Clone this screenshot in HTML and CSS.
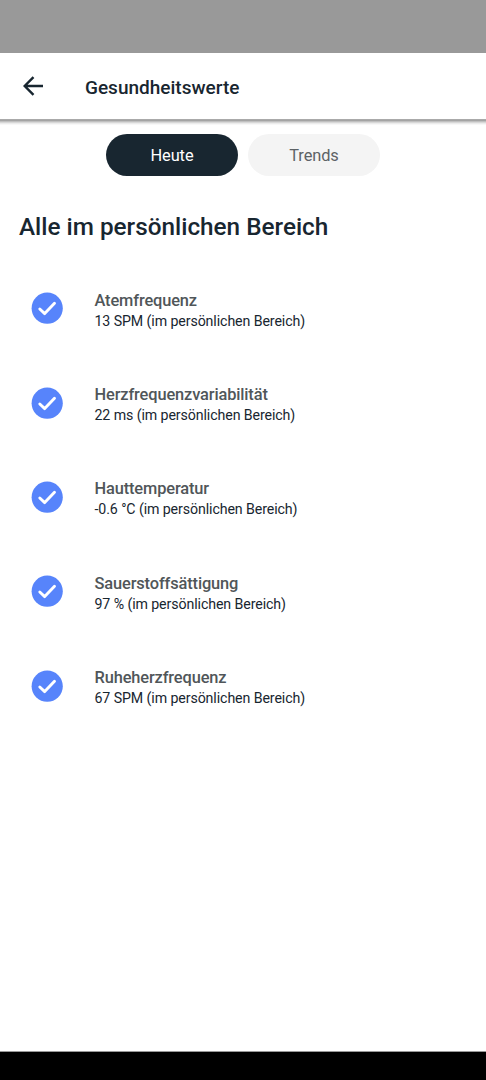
FILE: index.html
```html
<!DOCTYPE html>
<html lang="de">
<head>
<meta charset="utf-8">
<title>Gesundheitswerte</title>
<link rel="stylesheet" href="styles.css">
</head>
<body>
<div class="status-bar"></div>
<header class="app-bar">
  <svg class="back" viewBox="0 0 28 28"><path d="M24 14H6M14.5 5.2l-8.8 8.8 8.8 8.8"/></svg>
  <h1 class="title">Gesundheitswerte</h1>
</header>
<main class="content">
  <nav class="tabs">
    <button class="tab tab-active">Heute</button>
    <button class="tab">Trends</button>
  </nav>
  <h2 class="headline">Alle im persönlichen Bereich</h2>
  <ul class="metrics">
    <li class="metric">
      <svg class="check" viewBox="0 0 32 32"><circle cx="16.2" cy="16.2" r="15.6"/><path d="M8.8 17l4.9 4.6L23.5 11.3"/></svg>
      <div class="text"><div class="name">Atemfrequenz</div><div class="value">13 SPM (im persönlichen Bereich)</div></div>
    </li>
    <li class="metric">
      <svg class="check" viewBox="0 0 32 32"><circle cx="16.2" cy="16.2" r="15.6"/><path d="M8.8 17l4.9 4.6L23.5 11.3"/></svg>
      <div class="text"><div class="name">Herzfrequenzvariabilität</div><div class="value">22 ms (im persönlichen Bereich)</div></div>
    </li>
    <li class="metric">
      <svg class="check" viewBox="0 0 32 32"><circle cx="16.2" cy="16.2" r="15.6"/><path d="M8.8 17l4.9 4.6L23.5 11.3"/></svg>
      <div class="text"><div class="name">Hauttemperatur</div><div class="value">-0.6 °C (im persönlichen Bereich)</div></div>
    </li>
    <li class="metric">
      <svg class="check" viewBox="0 0 32 32"><circle cx="16.2" cy="16.2" r="15.6"/><path d="M8.8 17l4.9 4.6L23.5 11.3"/></svg>
      <div class="text"><div class="name">Sauerstoffsättigung</div><div class="value">97 % (im persönlichen Bereich)</div></div>
    </li>
    <li class="metric">
      <svg class="check" viewBox="0 0 32 32"><circle cx="16.2" cy="16.2" r="15.6"/><path d="M8.8 17l4.9 4.6L23.5 11.3"/></svg>
      <div class="text"><div class="name">Ruheherzfrequenz</div><div class="value">67 SPM (im persönlichen Bereich)</div></div>
    </li>
  </ul>
</main>
<div class="nav-bar"></div>
</body>
</html>
```
FILE: styles.css
```css
* { box-sizing: border-box; margin: 0; padding: 0; }
body {
  display: flex;
  flex-direction: column;
  height: 1080px;
  background: #fff;
  color: #182630;
  font-family: Roboto, sans-serif;
}
.status-bar { height: 53px; background: #999; }
.app-bar {
  display: flex;
  align-items: center;
  height: 66px;
  padding-left: 19px;
}
.back { width: 28px; height: 28px; margin-right: 38px; }
.back path { fill: none; stroke: #182630; stroke-width: 2.4; }
.title { padding-top: 3px; font-size: 19px; font-weight: 500; line-height: 24px; }
.content {
  flex: 1;
  padding-top: 15px;
  background: linear-gradient(#aaa 0 1px, #a4a4a4 1px 2px, #c0c0c0 2px 3px, #d8d8d8 3px 4px, #ececec 4px 5px, #f8f8f8 5px 6px, #fff 6px);
}
.tabs { display: flex; justify-content: center; gap: 10px; }
.tab {
  width: 132px;
  height: 42px;
  border: 0;
  border-radius: 21px;
  background: #f4f4f4;
  color: #5c6265;
  font: 400 16.4px Roboto, sans-serif;
  letter-spacing: -.1px;
}
.tab-active { background: #182630; color: #fff; }
.headline {
  margin: 35px 0 0 19px;
  font-size: 24.3px;
  font-weight: 500;
  line-height: 32px;
}
.metrics { list-style: none; margin-top: 18px; }
.metric {
  display: flex;
  align-items: center;
  height: 94.4px;
  padding-left: 31px;
}
.check { width: 32px; height: 32px; margin-right: 31.5px; }
.check circle { fill: #5784fb; }
.check path { fill: none; stroke: #fff; stroke-width: 2.9; stroke-linecap: round; stroke-linejoin: round; }
.text { padding-top: 5.5px; }
.name { font-size: 16.4px; font-weight: 500; line-height: 20px; letter-spacing: -.13px; color: #505659; }
.value { font-size: 14.2px; line-height: 20.5px; letter-spacing: -.1px; }
.nav-bar { height: 29px; border-top: 1px solid #999; background: #000; }
```
